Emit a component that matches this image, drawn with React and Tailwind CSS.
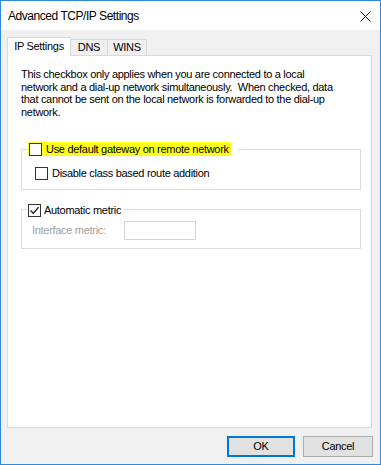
import React from "react";

const Checkbox = ({ checked }) => (
  <span className="w-[13px] h-[13px] border border-[#333333] bg-white flex items-center justify-center shrink-0">
    {checked && (
      <svg width="11" height="11" viewBox="0 0 11 11">
        <path d="M1.5 5.5 L4.3 8.3 L9.6 2.2" fill="none" stroke="#222" strokeWidth="1.3" />
      </svg>
    )}
  </span>
);

const Tab = ({ label, active, width }) =>
  active ? (
    <div
      className={`${width} h-[19px] -mb-px relative z-10 bg-white border-x border-t border-[#d9d9d9] flex items-center justify-center pb-[1px]`}
    >
      {label}
    </div>
  ) : (
    <div
      className={`${width} h-[16px] bg-[#f0f0f0] border-x border-t border-[#d9d9d9] -ml-px flex items-center justify-center`}
    >
      {label}
    </div>
  );

export default function App() {
  return (
    <div
      className="w-[381px] h-[465px] border border-[#2e8ad8] bg-[#f0f0f0] flex flex-col text-[11px] tracking-[-0.3px] text-black overflow-hidden"
      style={{ fontFamily: '"Liberation Sans", Arial, sans-serif' }}
    >
      {/* Title bar */}
      <div className="h-[29px] bg-white flex items-center justify-between pl-[7px] pr-[9px] shrink-0">
        <span className="text-[12px] tracking-[-0.45px] pt-[1px]">Advanced TCP/IP Settings</span>
        <svg width="11" height="11" viewBox="0 0 11 11" className="mt-[1px]">
          <path d="M0.5 0.5 L10.5 10.5 M10.5 0.5 L0.5 10.5" stroke="#111" strokeWidth="1" />
        </svg>
      </div>

      {/* Tabs */}
      <div className="mt-[7px] ml-[6px] h-[18px] flex items-end shrink-0">
        <Tab label="IP Settings" active width="w-[64px]" />
        <Tab label="DNS" width="w-[38px]" />
        <Tab label="WINS" width="w-[40px]" />
      </div>

      {/* Panel */}
      <div className="ml-[6px] w-[365px] h-[373px] bg-white border border-[#d9d9d9] pt-[12px] px-[13px] shrink-0">
        <p className="leading-[12.5px] whitespace-pre">
          {"This checkbox only applies when you are connected to a local\nnetwork and a dial-up network simultaneously.  When checked, data\nthat cannot be sent on the local network is forwarded to the dial-up\nnetwork."}
        </p>

        {/* Group 1 */}
        <div className="mt-[31px] w-[340px] h-[41px] border border-[#dcdcdc]">
          <div className="-mt-[8px] ml-[6px] flex w-fit bg-white pr-[7px]">
            <div className="flex items-center gap-[4px] bg-[#ffff1e] h-[14px] pl-[1px] pr-[2px]">
              <Checkbox />
              <span>Use default gateway on remote network</span>
            </div>
          </div>
          <div className="mt-[9px] ml-[13px] flex items-center gap-[4px]">
            <Checkbox />
            <span>Disable class based route addition</span>
          </div>
        </div>

        {/* Group 2 */}
        <div className="mt-[19px] w-[340px] h-[40px] border border-[#dcdcdc]">
          <div className="-mt-[7px] ml-[5px] flex w-fit items-center gap-[3px] bg-white pl-[1px] pr-[3px] h-[14px]">
            <Checkbox checked />
            <span>Automatic metric</span>
          </div>
          <div className="mt-[4px] ml-[10px] flex items-center">
            <span className="text-[#a0a0a0] w-[92px]">Interface metric:</span>
            <div className="w-[72px] h-[19px] border border-[#d4d4d4] bg-white" />
          </div>
        </div>
      </div>

      {/* Buttons */}
      <div className="mt-[8px] flex justify-end gap-[8px] pr-[7px] shrink-0">
        <button className="w-[68px] h-[21px] bg-[#e1e1e1] border border-[#0078d7] outline outline-1 outline-[#0078d7] -outline-offset-2 text-[11px]">
          OK
        </button>
        <button className="w-[70px] h-[21px] bg-[#e1e1e1] border border-[#adadad] text-[11px]">
          Cancel
        </button>
      </div>
    </div>
  );
}
